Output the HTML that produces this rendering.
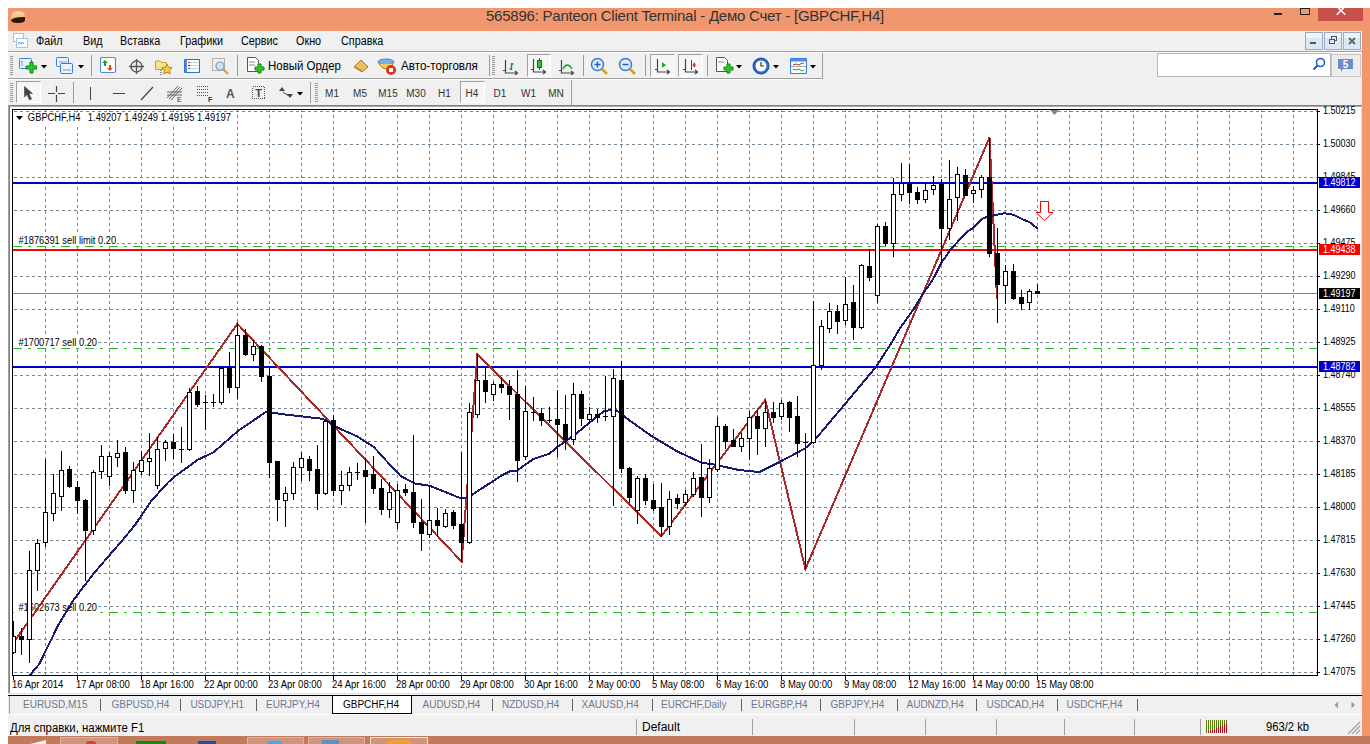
<!DOCTYPE html>
<html><head><meta charset="utf-8"><title>MT4</title><style>
html,body{margin:0;padding:0}
body{width:1370px;height:744px;overflow:hidden;background:#fff;position:relative;font-family:"Liberation Sans",sans-serif;}
.a{position:absolute}
.t{position:absolute;white-space:nowrap;line-height:1}
</style></head><body>

<div class="a" style="left:8px;top:8px;width:1362px;height:728px;background:#f0976f"></div>
<div class="a" style="left:1318px;top:8px;width:45px;height:13px;background:#c7504a"></div>
<svg class="a" style="left:1318px;top:8px" width="45" height="13"><path d="M18.7 -1.8 L27.3 6.8 M27.3 -1.8 L18.7 6.8" stroke="#fff" stroke-width="1.5"/></svg>
<div class="a" style="left:1274px;top:13px;width:8px;height:2px;background:#222"></div>
<div class="a" style="left:1300px;top:8px;width:8px;height:5px;border:1px solid #222;box-sizing:content-box"></div>
<div class="t" style="left:486px;top:8px;font-size:15px;letter-spacing:-0.23px;color:#333">565896: Panteon Client Terminal - Демо Счет - [GBPCHF,H4]</div>
<svg class="a" style="left:10px;top:10px" width="16" height="14"><defs><linearGradient id="gi" x1="0" y1="0" x2="0" y2="1"><stop offset="0" stop-color="#fde0b0"/><stop offset="1" stop-color="#f0a040"/></linearGradient></defs>
<path d="M1 8 Q1 1 8 1 Q15 1 15 7 L15 10 Q15 13 8 13 Q1 13 1 10Z" fill="url(#gi)"/><path d="M1 10 Q3 7 15 7 L15 10 Q15 13 8 13 Q1 13 1 10Z" fill="#2a1506"/></svg>
<div class="a" style="left:8px;top:31px;width:1354px;height:20px;background:#f0f0f0"></div>
<div class="a" style="left:8px;top:51px;width:1354px;height:1px;background:#a0a0a0"></div>
<div class="a" style="left:8px;top:52px;width:1354px;height:1px;background:#fff"></div>
<svg class="a" style="left:13px;top:33px" width="16" height="16"><rect x="0.5" y="0.5" width="10" height="8" fill="#fff" stroke="#4a90e2" stroke-dasharray="1 1"/><rect x="3.5" y="5.5" width="11" height="9" fill="#fff" stroke="#4a90e2" stroke-dasharray="1 1"/><path d="M5 11 l1.5 -2 l1.5 2 l1.5 -2 l1.5 2" stroke="#4a90e2" fill="none"/></svg>
<div class="t" style="left:36px;top:35px;font-size:12px;color:#000;transform:scaleX(0.9);transform-origin:0 0">Файл</div>
<div class="t" style="left:83px;top:35px;font-size:12px;color:#000;transform:scaleX(0.9);transform-origin:0 0">Вид</div>
<div class="t" style="left:120px;top:35px;font-size:12px;color:#000;transform:scaleX(0.9);transform-origin:0 0">Вставка</div>
<div class="t" style="left:180px;top:35px;font-size:12px;color:#000;transform:scaleX(0.9);transform-origin:0 0">Графики</div>
<div class="t" style="left:241px;top:35px;font-size:12px;color:#000;transform:scaleX(0.9);transform-origin:0 0">Сервис</div>
<div class="t" style="left:296px;top:35px;font-size:12px;color:#000;transform:scaleX(0.9);transform-origin:0 0">Окно</div>
<div class="t" style="left:341px;top:35px;font-size:12px;color:#000;transform:scaleX(0.9);transform-origin:0 0">Справка</div>
<div class="a" style="left:1305px;top:32px;width:18px;height:18px;background:linear-gradient(#eef4fb 0,#eef4fb 30%,#d9e7f6 31%,#d9e7f6 100%);border:1px solid #98abc2;box-sizing:border-box"></div>
<div class="a" style="left:1324px;top:32px;width:18px;height:18px;background:linear-gradient(#eef4fb 0,#eef4fb 30%,#d9e7f6 31%,#d9e7f6 100%);border:1px solid #98abc2;box-sizing:border-box"></div>
<div class="a" style="left:1343px;top:32px;width:18px;height:18px;background:linear-gradient(#eef4fb 0,#eef4fb 30%,#d9e7f6 31%,#d9e7f6 100%);border:1px solid #98abc2;box-sizing:border-box"></div>
<div class="a" style="left:1310px;top:42px;width:6px;height:2px;background:#555"></div>
<svg class="a" style="left:1324px;top:32px" width="18" height="18"><rect x="7.5" y="4.5" width="5" height="4" fill="none" stroke="#555"/><rect x="5.5" y="7.5" width="5" height="4" fill="#dce8f5" stroke="#555"/></svg>
<svg class="a" style="left:1343px;top:32px" width="18" height="18"><path d="M6 6 L12 12 M12 6 L6 12" stroke="#666" stroke-width="2"/></svg>
<div class="a" style="left:8px;top:53px;width:1354px;height:52px;background:#f0f0f0"></div>
<div class="a" style="left:8px;top:78px;width:815px;height:1px;background:#a0a0a0"></div>
<div class="a" style="left:822px;top:53px;width:1px;height:26px;background:#a0a0a0"></div>
<div class="a" style="left:8px;top:79px;width:815px;height:1px;background:#fff"></div>
<div class="a" style="left:571px;top:80px;width:1px;height:25px;background:#a0a0a0"></div>
<div class="a" style="left:8px;top:105px;width:1354px;height:1px;background:#808080"></div>
<div class="a" style="left:8px;top:106px;width:1354px;height:1px;background:#a9a9a9"></div>
<div class="a" style="left:10px;top:56px;width:3px;height:1px;background:#9a9a9a"></div><div class="a" style="left:10px;top:58px;width:3px;height:1px;background:#9a9a9a"></div><div class="a" style="left:10px;top:60px;width:3px;height:1px;background:#9a9a9a"></div><div class="a" style="left:10px;top:62px;width:3px;height:1px;background:#9a9a9a"></div><div class="a" style="left:10px;top:64px;width:3px;height:1px;background:#9a9a9a"></div><div class="a" style="left:10px;top:66px;width:3px;height:1px;background:#9a9a9a"></div><div class="a" style="left:10px;top:68px;width:3px;height:1px;background:#9a9a9a"></div><div class="a" style="left:10px;top:70px;width:3px;height:1px;background:#9a9a9a"></div><div class="a" style="left:10px;top:72px;width:3px;height:1px;background:#9a9a9a"></div><div class="a" style="left:10px;top:74px;width:3px;height:1px;background:#9a9a9a"></div>
<div class="a" style="left:10px;top:83px;width:3px;height:1px;background:#9a9a9a"></div><div class="a" style="left:10px;top:85px;width:3px;height:1px;background:#9a9a9a"></div><div class="a" style="left:10px;top:87px;width:3px;height:1px;background:#9a9a9a"></div><div class="a" style="left:10px;top:89px;width:3px;height:1px;background:#9a9a9a"></div><div class="a" style="left:10px;top:91px;width:3px;height:1px;background:#9a9a9a"></div><div class="a" style="left:10px;top:93px;width:3px;height:1px;background:#9a9a9a"></div><div class="a" style="left:10px;top:95px;width:3px;height:1px;background:#9a9a9a"></div><div class="a" style="left:10px;top:97px;width:3px;height:1px;background:#9a9a9a"></div><div class="a" style="left:10px;top:99px;width:3px;height:1px;background:#9a9a9a"></div><div class="a" style="left:10px;top:101px;width:3px;height:1px;background:#9a9a9a"></div>
<div class="a" style="left:492px;top:56px;width:3px;height:1px;background:#9a9a9a"></div><div class="a" style="left:492px;top:58px;width:3px;height:1px;background:#9a9a9a"></div><div class="a" style="left:492px;top:60px;width:3px;height:1px;background:#9a9a9a"></div><div class="a" style="left:492px;top:62px;width:3px;height:1px;background:#9a9a9a"></div><div class="a" style="left:492px;top:64px;width:3px;height:1px;background:#9a9a9a"></div><div class="a" style="left:492px;top:66px;width:3px;height:1px;background:#9a9a9a"></div><div class="a" style="left:492px;top:68px;width:3px;height:1px;background:#9a9a9a"></div><div class="a" style="left:492px;top:70px;width:3px;height:1px;background:#9a9a9a"></div><div class="a" style="left:492px;top:72px;width:3px;height:1px;background:#9a9a9a"></div><div class="a" style="left:492px;top:74px;width:3px;height:1px;background:#9a9a9a"></div>
<div class="a" style="left:315px;top:83px;width:3px;height:1px;background:#9a9a9a"></div><div class="a" style="left:315px;top:85px;width:3px;height:1px;background:#9a9a9a"></div><div class="a" style="left:315px;top:87px;width:3px;height:1px;background:#9a9a9a"></div><div class="a" style="left:315px;top:89px;width:3px;height:1px;background:#9a9a9a"></div><div class="a" style="left:315px;top:91px;width:3px;height:1px;background:#9a9a9a"></div><div class="a" style="left:315px;top:93px;width:3px;height:1px;background:#9a9a9a"></div><div class="a" style="left:315px;top:95px;width:3px;height:1px;background:#9a9a9a"></div><div class="a" style="left:315px;top:97px;width:3px;height:1px;background:#9a9a9a"></div><div class="a" style="left:315px;top:99px;width:3px;height:1px;background:#9a9a9a"></div><div class="a" style="left:315px;top:101px;width:3px;height:1px;background:#9a9a9a"></div>
<div class="a" style="left:91px;top:55px;width:1px;height:21px;background:#9a9a9a"></div>
<div class="a" style="left:237px;top:55px;width:1px;height:21px;background:#9a9a9a"></div>
<div class="a" style="left:489px;top:55px;width:1px;height:21px;background:#9a9a9a"></div>
<div class="a" style="left:583px;top:55px;width:1px;height:21px;background:#9a9a9a"></div>
<div class="a" style="left:645px;top:55px;width:1px;height:21px;background:#9a9a9a"></div>
<div class="a" style="left:707px;top:55px;width:1px;height:21px;background:#9a9a9a"></div>
<div class="a" style="left:73px;top:82px;width:1px;height:21px;background:#9a9a9a"></div>
<div class="a" style="left:310px;top:82px;width:1px;height:21px;background:#9a9a9a"></div>
<div class="a" style="left:16px;top:81px;width:25px;height:22px;background:#f6f6f6;border-left:1px solid #a0a0a0;border-top:1px solid #a0a0a0;border-right:1px solid #fff;border-bottom:1px solid #fff;box-sizing:border-box"></div>
<div class="a" style="left:527px;top:54px;width:24px;height:23px;background:#f6f6f6;border-left:1px solid #a0a0a0;border-top:1px solid #a0a0a0;border-right:1px solid #fff;border-bottom:1px solid #fff;box-sizing:border-box"></div>
<div class="a" style="left:650px;top:54px;width:25px;height:23px;background:#f6f6f6;border-left:1px solid #a0a0a0;border-top:1px solid #a0a0a0;border-right:1px solid #fff;border-bottom:1px solid #fff;box-sizing:border-box"></div>
<div class="a" style="left:678px;top:54px;width:25px;height:23px;background:#f6f6f6;border-left:1px solid #a0a0a0;border-top:1px solid #a0a0a0;border-right:1px solid #fff;border-bottom:1px solid #fff;box-sizing:border-box"></div>
<div class="a" style="left:460px;top:81px;width:25px;height:22px;background:#f6f6f6;border-left:1px solid #a0a0a0;border-top:1px solid #a0a0a0;border-right:1px solid #fff;border-bottom:1px solid #fff;box-sizing:border-box"></div>
<svg class="a" style="left:19px;top:57px" width="18" height="17"><rect x="0.5" y="1.5" width="12" height="10" rx="1" fill="#eaf2fb" stroke="#3b7dd8"/><path d="M3 4 v5 M2 5 l1 -1 l1 1" stroke="#7a9cc0" fill="none"/><path d="M9 5 h4 v-4 h3 v4 h4 v3 h-4 v4 h-3 v-4 h-4z" transform="translate(-2,4)" fill="#2ec82e" stroke="#0a8a0a"/></svg>
<svg class="a" style="left:41px;top:65px" width="7" height="4"><path d="M0 0 L6 0 L3 3.5Z" fill="#000"/></svg>
<svg class="a" style="left:56px;top:57px" width="18" height="18"><rect x="0.5" y="0.5" width="12" height="9" rx="1" fill="#eaf2fb" stroke="#3b7dd8"/><rect x="4.5" y="6.5" width="12" height="10" rx="1" fill="#eaf2fb" stroke="#3b7dd8"/><path d="M3 5 h8 M7 13 h8" stroke="#7a9cc0"/></svg>
<svg class="a" style="left:78px;top:65px" width="7" height="4"><path d="M0 0 L6 0 L3 3.5Z" fill="#000"/></svg>
<svg class="a" style="left:100px;top:57px" width="17" height="18"><rect x="0.5" y="0.5" width="15" height="15" rx="1.5" fill="#fff" stroke="#4a8ee0" stroke-width="1.2"/><path d="M5 3 l3 3 h-2 v3 h-2 v-3 h-2z" fill="#22a022"/><path d="M10 14 l3 -3 h-2 v-3 h-2 v3 h-2z" fill="#e05020"/></svg>
<svg class="a" style="left:128px;top:58px" width="17" height="17"><circle cx="8.5" cy="8.5" r="5.5" fill="none" stroke="#555" stroke-width="1.3"/><path d="M8.5 1 v15 M1 8.5 h15" stroke="#555" stroke-width="1.3"/></svg>
<svg class="a" style="left:155px;top:58px" width="18" height="17"><path d="M0.5 3 h5 l1 1.5 h5 v7 h-11z" fill="#f7e38a" stroke="#c9a437"/><path d="M12 6 l1.6 3.3 3.6 .5 -2.6 2.5 .6 3.6 -3.2 -1.7 -3.2 1.7 .6 -3.6 -2.6 -2.5 3.6 -.5z" fill="#f5d040" stroke="#b8860b"/><path d="M6 12 v5" stroke="#333" stroke-dasharray="1 1"/></svg>
<svg class="a" style="left:184px;top:59px" width="16" height="14"><rect x="0.5" y="0.5" width="15" height="13" rx="1" fill="#fff" stroke="#2f6fc8" stroke-width="1.2"/><rect x="1" y="1" width="2" height="12" fill="#4a90e2"/><path d="M5 3.5 h9 M5 6.5 h9 M5 9.5 h9" stroke="#9cc" stroke-width="0.8"/><circle cx="5" cy="3.5" r=".8" fill="#d00"/><circle cx="5" cy="6.5" r=".8" fill="#000"/><circle cx="5" cy="9.5" r=".8" fill="#d00"/></svg>
<svg class="a" style="left:212px;top:58px" width="18" height="18"><rect x="0.5" y="0.5" width="12" height="12" fill="#f3efe4" stroke="#b8b0a0"/><circle cx="8" cy="8" r="4" fill="#cfe2f3" stroke="#6a9fd8" stroke-width="1.2"/><path d="M11 11 l5 5" stroke="#d4a020" stroke-width="2"/></svg>
<svg class="a" style="left:247px;top:57px" width="18" height="19"><path d="M0.5 0.5 h8 l3 3 v11 h-11z" fill="#fff" stroke="#555"/><path d="M2 5 h6 M2 8 h6" stroke="#888"/><path d="M8 10 h3 v-3 h3 v3 h3 v3 h-3 v3 h-3 v-3 h-3z" fill="#2ec82e" stroke="#0a8a0a"/></svg>
<div class="t" style="left:268px;top:60px;font-size:12px;color:#000;transform:scaleX(0.954);transform-origin:0 0">Новый Ордер</div>
<svg class="a" style="left:352px;top:58px" width="18" height="16"><path d="M2 9 L9 2 L16 9 L10 14Z" fill="#e8c060" stroke="#a07820"/><path d="M2 9 L10 14 L10 12 L3 8z" fill="#c09040"/></svg>
<svg class="a" style="left:377px;top:56px" width="20" height="20"><ellipse cx="9" cy="6" rx="8" ry="3" fill="#7ab0e0" stroke="#4a80c0"/><path d="M2 8 q7 10 14 0" fill="#f5d050" stroke="#b08020"/><circle cx="14" cy="14" r="5" fill="#e03020"/><rect x="12" y="12" width="4" height="4" fill="#fff"/></svg>
<div class="t" style="left:401px;top:60px;font-size:12px;color:#000;transform:scaleX(0.97);transform-origin:0 0">Авто-торговля</div>
<svg class="a" style="left:502px;top:58px" width="17" height="17"><path d="M3.5 2 v13 h12 M1 12.5 h3 M13 13 l2.5 2 l-2.5 2" stroke="#444" fill="none" stroke-width="1.2"/><path d="M9.5 5 v7 M7.5 11 h2 M9.5 6 h2" stroke="#1a9a1a" stroke-width="1.4"/></svg>
<svg class="a" style="left:530px;top:57px" width="17" height="18"><path d="M3.5 2 v13 h12 M1 12.5 h3 M13 13 l2.5 2 l-2.5 2" stroke="#444" fill="none" stroke-width="1.2"/><rect x="7.5" y="3.5" width="4" height="7" fill="#2ec82e" stroke="#0a7a0a"/><path d="M9.5 1 v3 M9.5 10 v3" stroke="#0a7a0a"/></svg>
<svg class="a" style="left:558px;top:58px" width="17" height="17"><path d="M3.5 2 v13 h12 M1 12.5 h3 M13 13 l2.5 2 l-2.5 2" stroke="#444" fill="none" stroke-width="1.2"/><path d="M5 11 q4 -8 9 0" stroke="#1a9a1a" fill="none" stroke-width="1.3"/></svg>
<svg class="a" style="left:590px;top:57px" width="19" height="19"><circle cx="7.5" cy="7.5" r="6" fill="#dcecfb" stroke="#3a7ad0" stroke-width="1.5"/><path d="M4.5 7.5 h6 M7.5 4.5 v6" stroke="#2060c0" stroke-width="1.5"/><path d="M12 12 l5 5" stroke="#d4a020" stroke-width="2.5"/></svg>
<svg class="a" style="left:618px;top:57px" width="19" height="19"><circle cx="7.5" cy="7.5" r="6" fill="#dcecfb" stroke="#3a7ad0" stroke-width="1.5"/><path d="M4.5 7.5 h6" stroke="#2060c0" stroke-width="1.5"/><path d="M12 12 l5 5" stroke="#d4a020" stroke-width="2.5"/></svg>
<svg class="a" style="left:654px;top:57px" width="18" height="18"><path d="M3.5 2 v13 h12 M1 12.5 h3 M13 13 l2.5 2 l-2.5 2" stroke="#444" fill="none" stroke-width="1.2"/><path d="M8 5 l4 3 l-4 3z" fill="#1ab01a"/></svg>
<svg class="a" style="left:682px;top:57px" width="18" height="18"><path d="M3.5 2 v13 h12 M1 12.5 h3 M13 13 l2.5 2 l-2.5 2" stroke="#444" fill="none" stroke-width="1.2"/><path d="M9.5 3 v10" stroke="#444"/><path d="M14 8 h-3 M11 8 l2 -2 M11 8 l2 2" stroke="#e02020" stroke-width="1.2"/></svg>
<svg class="a" style="left:716px;top:57px" width="18" height="19"><path d="M0.5 0.5 h8 l3 3 v11 h-11z" fill="#fff" stroke="#555"/><path d="M2 5 h6" stroke="#888"/><path d="M8 10 h3 v-3 h3 v3 h3 v3 h-3 v3 h-3 v-3 h-3z" fill="#2ec82e" stroke="#0a8a0a"/></svg>
<svg class="a" style="left:736px;top:65px" width="7" height="4"><path d="M0 0 L6 0 L3 3.5Z" fill="#000"/></svg>
<svg class="a" style="left:752px;top:57px" width="18" height="18"><circle cx="9" cy="9" r="8" fill="#2a6ad0" stroke="#1a4a9a"/><circle cx="9" cy="9" r="5.5" fill="#fff"/><path d="M9 5 v4 h3" stroke="#333" stroke-width="1.2" fill="none"/></svg>
<svg class="a" style="left:773px;top:65px" width="7" height="4"><path d="M0 0 L6 0 L3 3.5Z" fill="#000"/></svg>
<svg class="a" style="left:790px;top:58px" width="17" height="16"><rect x="0.5" y="0.5" width="16" height="15" rx="1" fill="#fff" stroke="#3b7dd8" stroke-width="1.2"/><rect x="1" y="1" width="15" height="2.5" fill="#4a90e2"/><path d="M1 8.5 h15" stroke="#9ab"/><path d="M3 7 l3 -1 l3 1 l3 -2 l2 1" stroke="#c03020" fill="none"/><path d="M3 11 l3 1 l3 -1 l3 2 l2 -1" stroke="#20a020" fill="none"/></svg>
<svg class="a" style="left:810px;top:65px" width="7" height="4"><path d="M0 0 L6 0 L3 3.5Z" fill="#000"/></svg>
<div class="a" style="left:1157px;top:53px;width:174px;height:24px;background:#fff;border:1px solid #b8b8b8;box-sizing:border-box"></div>
<svg class="a" style="left:1312px;top:57px" width="14" height="14"><circle cx="8.5" cy="5.5" r="4" fill="none" stroke="#2a5ec0" stroke-width="1.6"/><path d="M5.5 8.5 L1.5 12.5" stroke="#2a5ec0" stroke-width="2.2"/></svg>
<div class="a" style="left:1331px;top:54px;width:30px;height:23px;background:#ececec;border:1px solid #c8c8c8;box-sizing:border-box"></div>
<svg class="a" style="left:1337px;top:58px" width="18" height="16"><path d="M1 1 h15 v10 h-10 l-2 3 v-3 h-3z" fill="#6b8cc4"/><text x="8.5" y="10" font-size="10" font-family="Liberation Sans" font-weight="bold" fill="#fff" text-anchor="middle">5</text></svg>
<svg class="a" style="left:24px;top:86px" width="9" height="15"><path d="M0.5 0.5 L0.5 11 L3 8.5 L5.5 14 L7.5 13 L5 7.5 L8.5 7.5Z" fill="#444" stroke="#444" stroke-width="0.6"/></svg>
<svg class="a" style="left:48px;top:86px" width="17" height="16"><path d="M8.5 0 v6 M8.5 9 v7 M0 7.5 h7 M10 7.5 h7" stroke="#444" stroke-width="1.2"/></svg>
<div class="a" style="left:90px;top:87px;width:1px;height:13px;background:#444"></div>
<div class="a" style="left:113px;top:93px;width:12px;height:1px;background:#444"></div>
<svg class="a" style="left:140px;top:86px" width="14" height="15"><path d="M1 14 L13 1" stroke="#444" stroke-width="1.2"/></svg>
<svg class="a" style="left:166px;top:84px" width="18" height="18"><path d="M1 14 L12 2 M3 15 L14 3 M5 16 L16 4 M1 8 h15 M1 11 h15" stroke="#555" stroke-width="0.9"/><text x="11" y="18" font-size="7" font-family="Liberation Sans" fill="#333">E</text></svg>
<svg class="a" style="left:196px;top:84px" width="18" height="18"><path d="M1 2.5 h12 M1 5.5 h12 M1 8.5 h12 M1 11.5 h12" stroke="#555" stroke-dasharray="1 1"/><text x="12" y="18" font-size="7" font-family="Liberation Sans" fill="#333" font-weight="bold">F</text></svg>
<div class="t" style="left:226px;top:88px;font-size:12px;font-weight:bold;color:#555">A</div>
<svg class="a" style="left:251px;top:85px" width="16" height="16"><rect x="1.5" y="1.5" width="12" height="12" fill="none" stroke="#555" stroke-dasharray="1 1" shape-rendering="crispEdges"/><text x="7.5" y="12" font-size="11" font-family="Liberation Sans" font-weight="bold" fill="#444" text-anchor="middle">T</text></svg>
<svg class="a" style="left:279px;top:86px" width="14" height="14"><path d="M3 1 l3 4 h-6z M11 12 l3 -4 h-6z" fill="#444"/><path d="M4 6 l6 4" stroke="#444"/></svg>
<svg class="a" style="left:297px;top:92px" width="7" height="4"><path d="M0 0 L6 0 L3 3.5Z" fill="#000"/></svg>
<div class="t" style="left:312px;width:40px;text-align:center;top:89px;font-size:10px;color:#333">M1</div>
<div class="t" style="left:340px;width:40px;text-align:center;top:89px;font-size:10px;color:#333">M5</div>
<div class="t" style="left:368px;width:40px;text-align:center;top:89px;font-size:10px;color:#333">M15</div>
<div class="t" style="left:396px;width:40px;text-align:center;top:89px;font-size:10px;color:#333">M30</div>
<div class="t" style="left:424.5px;width:40px;text-align:center;top:89px;font-size:10px;color:#333">H1</div>
<div class="t" style="left:452px;width:40px;text-align:center;top:89px;font-size:10px;color:#333">H4</div>
<div class="t" style="left:480px;width:40px;text-align:center;top:89px;font-size:10px;color:#333">D1</div>
<div class="t" style="left:508.5px;width:40px;text-align:center;top:89px;font-size:10px;color:#333">W1</div>
<div class="t" style="left:536px;width:40px;text-align:center;top:89px;font-size:10px;color:#333">MN</div>
<div class="a" style="left:8px;top:107px;width:1354px;height:587px;background:#fff"></div>
<div class="a" style="left:8px;top:105px;width:2px;height:589px;background:#a0a0a0"></div>
<div class="a" style="left:9px;top:106px;width:1px;height:587px;background:#808080"></div>
<div class="a" style="left:1361px;top:106px;width:1px;height:588px;background:#e3e3e3"></div>
<div class="a" style="left:8px;top:693px;width:1354px;height:1px;background:#e3e3e3"></div>
<svg class="a" style="left:0px;top:0px" width="1370" height="744" shape-rendering="crispEdges"><defs><clipPath id="pc"><rect x="13" y="110" width="1304" height="565"/></clipPath></defs><path d="M13 111.5 H1317 M13 144.5 H1317 M13 177.5 H1317 M13 210.5 H1317 M13 243.5 H1317 M13 276.5 H1317 M13 309.5 H1317 M13 342.5 H1317 M13 375.5 H1317 M13 408.5 H1317 M13 441.5 H1317 M13 474.5 H1317 M13 507.5 H1317 M13 540.5 H1317 M13 573.5 H1317 M13 606.5 H1317 M13 639.5 H1317 M13 672.5 H1317 " stroke="#778899" stroke-width="1" stroke-dasharray="3 3" stroke-dashoffset="-1"/><path d="M45.5 110 V675 M77.5 110 V675 M109.5 110 V675 M141.5 110 V675 M173.5 110 V675 M205.5 110 V675 M237.5 110 V675 M269.5 110 V675 M301.5 110 V675 M333.5 110 V675 M365.5 110 V675 M397.5 110 V675 M429.5 110 V675 M461.5 110 V675 M493.5 110 V675 M525.5 110 V675 M557.5 110 V675 M589.5 110 V675 M621.5 110 V675 M653.5 110 V675 M685.5 110 V675 M717.5 110 V675 M749.5 110 V675 M781.5 110 V675 M813.5 110 V675 M845.5 110 V675 M877.5 110 V675 M909.5 110 V675 M941.5 110 V675 M973.5 110 V675 M1005.5 110 V675 M1037.5 110 V675 M1069.5 110 V675 M1101.5 110 V675 M1133.5 110 V675 M1165.5 110 V675 M1197.5 110 V675 M1229.5 110 V675 M1261.5 110 V675 M1293.5 110 V675 " stroke="#778899" stroke-width="1" stroke-dasharray="3 3" stroke-dashoffset="-5"/><g clip-path="url(#pc)"><path d="M13 246.5 H1317 M13 348.5 H1317 M13 612.5 H1317" stroke="#2eb82e" stroke-width="1" stroke-dasharray="9 6 3 6"/><rect x="13" y="249" width="1304" height="2" fill="#ff0000"/><rect x="13" y="182" width="1304" height="2" fill="#0000cd"/><rect x="13" y="366" width="1304" height="2" fill="#0000cd"/><path d="M13 293.5 H1317" stroke="#778899" stroke-width="1"/></g></svg>
<div class="t" style="left:14px;top:234px;padding:1px 1px 0 5px;background:#fff;font-size:10.5px;color:#000;transform:scaleX(0.885);transform-origin:0 0">#1876391 sell limit 0.20</div>
<div class="t" style="left:14px;top:336px;padding:1px 1px 0 5px;background:#fff;font-size:10.5px;color:#000;transform:scaleX(0.885);transform-origin:0 0">#1700717 sell 0.20</div>
<div class="t" style="left:14px;top:601px;padding:1px 1px 0 5px;background:#fff;font-size:10.5px;color:#000;transform:scaleX(0.885);transform-origin:0 0">#1602673 sell 0.20</div>
<svg class="a" style="left:0px;top:0px" width="1370" height="744"><defs><clipPath id="pc2"><rect x="13" y="110" width="1304" height="565"/></clipPath></defs><g clip-path="url(#pc2)"><polyline points="13.0,643.5 237.4,323.8 461.6,561.6 477.4,354.4 661.3,536.1 765.3,399.9 805.4,569.0 989.5,137.5 997.0,299.0" fill="none" stroke="#a52a2a" stroke-width="2" shape-rendering="crispEdges"/><polyline points="20.0,690.0 30.2,674.7 39.3,664.0 58.4,624.7 74.5,598.5 94.7,572.3 120.9,542.0 134.9,525.2 150.7,501.6 168.1,482.4 175.1,476.3 190.8,464.9 197.8,459.7 213.5,452.4 238.5,430.5 266.5,411.6 281.0,414.0 323.2,418.9 337.7,427.8 357.1,436.3 374.0,447.2 383.7,458.0 400.7,476.2 415.2,483.5 430.0,485.9 460.0,498.0 464.8,498.0 471.3,495.4 483.4,487.4 500.9,475.9 510.3,471.2 517.0,470.6 533.2,459.1 549.3,453.8 557.4,447.0 566.8,440.3 576.2,433.6 591.0,421.5 604.4,410.8 615.9,409.8 629.0,420.0 651.6,436.1 677.4,451.5 701.5,462.7 715.0,464.7 737.8,469.8 759.3,472.1 782.2,460.6 805.0,448.5 815.5,439.1 845.2,403.8 865.4,379.5 876.1,366.7 890.9,343.8 900.3,327.7 913.8,308.9 923.2,293.4 932.6,280.0 941.5,262.6 950.9,249.1 967.0,231.7 973.8,227.6 981.8,218.9 987.2,216.9 999.3,214.2 1004.4,213.3 1013.4,214.7 1020.5,218.3 1029.6,222.3 1037.6,228.4" fill="none" stroke="#191970" stroke-width="2" stroke-linejoin="round" shape-rendering="crispEdges"/></g><path d="M1040.5 201.5 h8 v11 h4.5 l-8.5 8 l-8.5 -8 h4.5z" fill="#fff" stroke="#ff0000" stroke-width="1"/></svg>
<svg class="a" style="left:0px;top:0px" width="1370" height="744" shape-rendering="crispEdges"><defs><clipPath id="pc3"><rect x="13" y="110" width="1304" height="565"/></clipPath></defs><g clip-path="url(#pc3)"><path d="M13.5 621 V654 M21.5 628 V655 M29.5 551 V663 M37.5 539 V591 M45.5 459 V547 M53.5 474 V521 M61.5 451 V511 M69.5 466 V488 M77.5 481 V514 M85.5 499 V581 M93.5 470 V535 M101.5 445 V479 M109.5 452 V486 M117.5 440 V467 M125.5 447 V494 M133.5 462 V503 M141.5 451 V475 M149.5 433 V476 M157.5 437 V489 M165.5 440 V461 M173.5 434 V459 M181.5 427 V463 M189.5 388 V451 M197.5 386 V407 M205.5 395 V430 M213.5 394 V407 M221.5 366 V405 M229.5 352 V393 M237.5 323 V399 M245.5 329 V356 M253.5 341 V361 M261.5 345 V382 M269.5 368 V478 M277.5 461 V521 M285.5 487 V527 M293.5 462 V500 M301.5 452 V481 M309.5 456 V481 M317.5 445 V510 M325.5 419 V495 M333.5 415 V496 M341.5 471 V505 M349.5 467 V491 M357.5 463 V480 M365.5 458 V523 M373.5 456 V494 M381.5 479 V515 M389.5 482 V518 M397.5 484 V529 M405.5 484 V496 M413.5 435 V528 M421.5 499 V551 M429.5 485 V538 M437.5 508 V537 M445.5 509 V528 M453.5 510 V529 M461.5 452 V562 M469.5 403 V544 M477.5 354 V418 M485.5 366 V403 M493.5 382 V401 M501.5 377 V393 M509.5 380 V420 M517.5 370 V482 M525.5 386 V460 M533.5 397 V421 M541.5 408 V426 M549.5 407 V423 M557.5 390 V457 M565.5 395 V450 M573.5 383 V445 M581.5 391 V426 M589.5 407 V424 M597.5 409 V423 M605.5 376 V421 M613.5 369 V506 M621.5 361 V473 M629.5 467 V503 M637.5 476 V524 M645.5 474 V505 M653.5 484 V511 M661.5 483 V537 M669.5 491 V535 M677.5 494 V509 M685.5 490 V506 M693.5 472 V497 M701.5 444 V517 M709.5 459 V503 M717.5 417 V472 M725.5 424 V449 M733.5 429 V447 M741.5 433 V452 M749.5 411 V460 M757.5 410 V455 M765.5 400 V447 M773.5 402 V423 M781.5 400 V420 M789.5 401 V432 M797.5 396 V457 M805.5 433 V569 M813.5 301 V444 M821.5 320 V370 M829.5 303 V333 M837.5 305 V334 M845.5 277 V325 M853.5 285 V340 M861.5 264 V329 M869.5 249 V281 M877.5 224 V303 M885.5 222 V246 M893.5 178 V257 M901.5 163 V201 M909.5 164 V204 M917.5 187 V204 M925.5 183 V203 M933.5 176 V195 M941.5 179 V261 M949.5 160 V240 M957.5 167 V221 M965.5 169 V196 M973.5 186 V203 M981.5 175 V198 M989.5 138 V257 M997.5 228 V323 M1005.5 265 V304 M1013.5 264 V300 M1021.5 290 V310 M1029.5 289 V310 M1037.5 284 V294 " stroke="#000" stroke-width="1"/><rect x="11" y="636" width="5" height="17" fill="#000"/><rect x="12" y="637" width="3" height="15" fill="#fff"/><rect x="19" y="636" width="5" height="4" fill="#000"/><rect x="27" y="570" width="5" height="70" fill="#000"/><rect x="28" y="571" width="3" height="68" fill="#fff"/><rect x="35" y="543" width="5" height="28" fill="#000"/><rect x="36" y="544" width="3" height="26" fill="#fff"/><rect x="43" y="512" width="5" height="31" fill="#000"/><rect x="44" y="513" width="3" height="29" fill="#fff"/><rect x="51" y="493" width="5" height="21" fill="#000"/><rect x="52" y="494" width="3" height="19" fill="#fff"/><rect x="59" y="470" width="5" height="27" fill="#000"/><rect x="60" y="471" width="3" height="25" fill="#fff"/><rect x="67" y="469" width="5" height="18" fill="#000"/><rect x="75" y="487" width="5" height="14" fill="#000"/><rect x="83" y="500" width="5" height="31" fill="#000"/><rect x="91" y="472" width="5" height="59" fill="#000"/><rect x="92" y="473" width="3" height="57" fill="#fff"/><rect x="99" y="456" width="5" height="16" fill="#000"/><rect x="100" y="457" width="3" height="14" fill="#fff"/><rect x="107" y="456" width="5" height="21" fill="#000"/><rect x="108" y="457" width="3" height="19" fill="#fff"/><rect x="115" y="453" width="5" height="5" fill="#000"/><rect x="116" y="454" width="3" height="3" fill="#fff"/><rect x="123" y="452" width="5" height="39" fill="#000"/><rect x="131" y="470" width="5" height="21" fill="#000"/><rect x="132" y="471" width="3" height="19" fill="#fff"/><rect x="139" y="460" width="5" height="12" fill="#000"/><rect x="140" y="461" width="3" height="10" fill="#fff"/><rect x="147" y="458" width="5" height="4" fill="#000"/><rect x="148" y="459" width="3" height="2" fill="#fff"/><rect x="155" y="449" width="5" height="37" fill="#000"/><rect x="156" y="450" width="3" height="35" fill="#fff"/><rect x="163" y="442" width="5" height="7" fill="#000"/><rect x="164" y="443" width="3" height="5" fill="#fff"/><rect x="171" y="442" width="5" height="7" fill="#000"/><rect x="187" y="392" width="5" height="58" fill="#000"/><rect x="188" y="393" width="3" height="56" fill="#fff"/><rect x="195" y="391" width="5" height="14" fill="#000"/><rect x="219" y="368" width="5" height="35" fill="#000"/><rect x="220" y="369" width="3" height="33" fill="#fff"/><rect x="227" y="367" width="5" height="21" fill="#000"/><rect x="235" y="335" width="5" height="53" fill="#000"/><rect x="236" y="336" width="3" height="51" fill="#fff"/><rect x="243" y="335" width="5" height="20" fill="#000"/><rect x="251" y="346" width="5" height="9" fill="#000"/><rect x="252" y="347" width="3" height="7" fill="#fff"/><rect x="259" y="346" width="5" height="31" fill="#000"/><rect x="267" y="376" width="5" height="87" fill="#000"/><rect x="275" y="461" width="5" height="39" fill="#000"/><rect x="283" y="493" width="5" height="8" fill="#000"/><rect x="284" y="494" width="3" height="6" fill="#fff"/><rect x="291" y="467" width="5" height="27" fill="#000"/><rect x="292" y="468" width="3" height="25" fill="#fff"/><rect x="299" y="458" width="5" height="10" fill="#000"/><rect x="300" y="459" width="3" height="8" fill="#fff"/><rect x="307" y="459" width="5" height="12" fill="#000"/><rect x="315" y="469" width="5" height="25" fill="#000"/><rect x="323" y="421" width="5" height="73" fill="#000"/><rect x="324" y="422" width="3" height="71" fill="#fff"/><rect x="331" y="420" width="5" height="71" fill="#000"/><rect x="339" y="485" width="5" height="6" fill="#000"/><rect x="340" y="486" width="3" height="4" fill="#fff"/><rect x="347" y="472" width="5" height="14" fill="#000"/><rect x="348" y="473" width="3" height="12" fill="#fff"/><rect x="363" y="470" width="5" height="7" fill="#000"/><rect x="371" y="474" width="5" height="15" fill="#000"/><rect x="379" y="488" width="5" height="22" fill="#000"/><rect x="387" y="492" width="5" height="18" fill="#000"/><rect x="388" y="493" width="3" height="16" fill="#fff"/><rect x="395" y="490" width="5" height="33" fill="#000"/><rect x="396" y="491" width="3" height="31" fill="#fff"/><rect x="403" y="489" width="5" height="4" fill="#000"/><rect x="411" y="492" width="5" height="31" fill="#000"/><rect x="419" y="522" width="5" height="12" fill="#000"/><rect x="427" y="520" width="5" height="15" fill="#000"/><rect x="428" y="521" width="3" height="13" fill="#fff"/><rect x="435" y="520" width="5" height="6" fill="#000"/><rect x="443" y="513" width="5" height="14" fill="#000"/><rect x="444" y="514" width="3" height="12" fill="#fff"/><rect x="451" y="512" width="5" height="14" fill="#000"/><rect x="459" y="524" width="5" height="19" fill="#000"/><rect x="467" y="412" width="5" height="131" fill="#000"/><rect x="468" y="413" width="3" height="129" fill="#fff"/><rect x="475" y="380" width="5" height="35" fill="#000"/><rect x="476" y="381" width="3" height="33" fill="#fff"/><rect x="483" y="380" width="5" height="12" fill="#000"/><rect x="491" y="384" width="5" height="11" fill="#000"/><rect x="492" y="385" width="3" height="9" fill="#fff"/><rect x="499" y="384" width="5" height="4" fill="#000"/><rect x="507" y="386" width="5" height="9" fill="#000"/><rect x="515" y="394" width="5" height="67" fill="#000"/><rect x="523" y="411" width="5" height="46" fill="#000"/><rect x="524" y="412" width="3" height="44" fill="#fff"/><rect x="539" y="413" width="5" height="8" fill="#000"/><rect x="555" y="419" width="5" height="6" fill="#000"/><rect x="563" y="424" width="5" height="16" fill="#000"/><rect x="571" y="394" width="5" height="46" fill="#000"/><rect x="572" y="395" width="3" height="44" fill="#fff"/><rect x="579" y="394" width="5" height="25" fill="#000"/><rect x="587" y="414" width="5" height="6" fill="#000"/><rect x="588" y="415" width="3" height="4" fill="#fff"/><rect x="595" y="414" width="5" height="4" fill="#000"/><rect x="611" y="378" width="5" height="39" fill="#000"/><rect x="612" y="379" width="3" height="37" fill="#fff"/><rect x="619" y="380" width="5" height="89" fill="#000"/><rect x="627" y="468" width="5" height="30" fill="#000"/><rect x="635" y="478" width="5" height="33" fill="#000"/><rect x="636" y="479" width="3" height="31" fill="#fff"/><rect x="643" y="478" width="5" height="23" fill="#000"/><rect x="651" y="500" width="5" height="9" fill="#000"/><rect x="659" y="507" width="5" height="20" fill="#000"/><rect x="667" y="499" width="5" height="28" fill="#000"/><rect x="668" y="500" width="3" height="26" fill="#fff"/><rect x="675" y="498" width="5" height="6" fill="#000"/><rect x="683" y="494" width="5" height="9" fill="#000"/><rect x="684" y="495" width="3" height="7" fill="#fff"/><rect x="691" y="478" width="5" height="17" fill="#000"/><rect x="692" y="479" width="3" height="15" fill="#fff"/><rect x="699" y="477" width="5" height="21" fill="#000"/><rect x="707" y="468" width="5" height="30" fill="#000"/><rect x="708" y="469" width="3" height="28" fill="#fff"/><rect x="715" y="426" width="5" height="44" fill="#000"/><rect x="716" y="427" width="3" height="42" fill="#fff"/><rect x="723" y="426" width="5" height="16" fill="#000"/><rect x="731" y="440" width="5" height="7" fill="#000"/><rect x="739" y="438" width="5" height="9" fill="#000"/><rect x="740" y="439" width="3" height="7" fill="#fff"/><rect x="747" y="417" width="5" height="22" fill="#000"/><rect x="748" y="418" width="3" height="20" fill="#fff"/><rect x="755" y="416" width="5" height="13" fill="#000"/><rect x="763" y="412" width="5" height="17" fill="#000"/><rect x="764" y="413" width="3" height="15" fill="#fff"/><rect x="771" y="412" width="5" height="6" fill="#000"/><rect x="779" y="403" width="5" height="14" fill="#000"/><rect x="780" y="404" width="3" height="12" fill="#fff"/><rect x="787" y="402" width="5" height="16" fill="#000"/><rect x="795" y="416" width="5" height="28" fill="#000"/><rect x="811" y="365" width="5" height="78" fill="#000"/><rect x="812" y="366" width="3" height="76" fill="#fff"/><rect x="819" y="326" width="5" height="40" fill="#000"/><rect x="820" y="327" width="3" height="38" fill="#fff"/><rect x="827" y="311" width="5" height="18" fill="#000"/><rect x="828" y="312" width="3" height="16" fill="#fff"/><rect x="835" y="311" width="5" height="11" fill="#000"/><rect x="843" y="304" width="5" height="17" fill="#000"/><rect x="844" y="305" width="3" height="15" fill="#fff"/><rect x="851" y="302" width="5" height="26" fill="#000"/><rect x="859" y="265" width="5" height="63" fill="#000"/><rect x="860" y="266" width="3" height="61" fill="#fff"/><rect x="867" y="266" width="5" height="12" fill="#000"/><rect x="875" y="226" width="5" height="70" fill="#000"/><rect x="876" y="227" width="3" height="68" fill="#fff"/><rect x="883" y="226" width="5" height="18" fill="#000"/><rect x="891" y="194" width="5" height="50" fill="#000"/><rect x="892" y="195" width="3" height="48" fill="#fff"/><rect x="899" y="183" width="5" height="12" fill="#000"/><rect x="900" y="184" width="3" height="10" fill="#fff"/><rect x="907" y="183" width="5" height="10" fill="#000"/><rect x="915" y="192" width="5" height="8" fill="#000"/><rect x="923" y="190" width="5" height="10" fill="#000"/><rect x="924" y="191" width="3" height="8" fill="#fff"/><rect x="931" y="185" width="5" height="5" fill="#000"/><rect x="932" y="186" width="3" height="3" fill="#fff"/><rect x="939" y="184" width="5" height="45" fill="#000"/><rect x="947" y="199" width="5" height="30" fill="#000"/><rect x="948" y="200" width="3" height="28" fill="#fff"/><rect x="955" y="174" width="5" height="24" fill="#000"/><rect x="956" y="175" width="3" height="22" fill="#fff"/><rect x="963" y="175" width="5" height="21" fill="#000"/><rect x="971" y="190" width="5" height="4" fill="#000"/><rect x="972" y="191" width="3" height="2" fill="#fff"/><rect x="979" y="177" width="5" height="13" fill="#000"/><rect x="980" y="178" width="3" height="11" fill="#fff"/><rect x="987" y="177" width="5" height="77" fill="#000"/><rect x="995" y="253" width="5" height="32" fill="#000"/><rect x="1003" y="271" width="5" height="15" fill="#000"/><rect x="1004" y="272" width="3" height="13" fill="#fff"/><rect x="1011" y="271" width="5" height="28" fill="#000"/><rect x="1019" y="297" width="5" height="7" fill="#000"/><rect x="1027" y="291" width="5" height="12" fill="#000"/><rect x="1028" y="292" width="3" height="10" fill="#fff"/><rect x="1035" y="291" width="5" height="3" fill="#000"/><path d="M179 449.5 h5 M203 402.5 h5 M211 402.5 h5 M355 472.5 h5 M531 412.5 h5 M547 420.5 h5 M603 416.5 h5 M803 442.5 h5 " stroke="#000" stroke-width="1"/></g><rect x="12.5" y="109.5" width="1305" height="566" fill="none" stroke="#000" stroke-width="1"/><path d="M1050 110 h9 l-4.5 5z" fill="#778899" shape-rendering="geometricPrecision"/><path d="M1318 111.5 h2 M1318 144.5 h2 M1318 177.5 h2 M1318 210.5 h2 M1318 243.5 h2 M1318 276.5 h2 M1318 309.5 h2 M1318 342.5 h2 M1318 375.5 h2 M1318 408.5 h2 M1318 441.5 h2 M1318 474.5 h2 M1318 507.5 h2 M1318 540.5 h2 M1318 573.5 h2 M1318 606.5 h2 M1318 639.5 h2 M1318 672.5 h2 M13.5 676 v4 M77.5 676 v4 M141.5 676 v4 M205.5 676 v4 M269.5 676 v4 M333.5 676 v4 M397.5 676 v4 M461.5 676 v4 M525.5 676 v4 M589.5 676 v4 M653.5 676 v4 M717.5 676 v4 M781.5 676 v4 M845.5 676 v4 M909.5 676 v4 M973.5 676 v4 M1037.5 676 v4 " stroke="#000" stroke-width="1"/></svg>
<div class="t" style="left:1323px;top:106px;font-size:10px;color:#000;transform:scaleX(0.9);transform-origin:0 0">1.50215</div>
<div class="t" style="left:1323px;top:139px;font-size:10px;color:#000;transform:scaleX(0.9);transform-origin:0 0">1.50030</div>
<div class="t" style="left:1323px;top:172px;font-size:10px;color:#000;transform:scaleX(0.9);transform-origin:0 0">1.49845</div>
<div class="t" style="left:1323px;top:205px;font-size:10px;color:#000;transform:scaleX(0.9);transform-origin:0 0">1.49660</div>
<div class="t" style="left:1323px;top:238px;font-size:10px;color:#000;transform:scaleX(0.9);transform-origin:0 0">1.49475</div>
<div class="t" style="left:1323px;top:271px;font-size:10px;color:#000;transform:scaleX(0.9);transform-origin:0 0">1.49290</div>
<div class="t" style="left:1323px;top:304px;font-size:10px;color:#000;transform:scaleX(0.9);transform-origin:0 0">1.49110</div>
<div class="t" style="left:1323px;top:337px;font-size:10px;color:#000;transform:scaleX(0.9);transform-origin:0 0">1.48925</div>
<div class="t" style="left:1323px;top:370px;font-size:10px;color:#000;transform:scaleX(0.9);transform-origin:0 0">1.48740</div>
<div class="t" style="left:1323px;top:403px;font-size:10px;color:#000;transform:scaleX(0.9);transform-origin:0 0">1.48555</div>
<div class="t" style="left:1323px;top:436px;font-size:10px;color:#000;transform:scaleX(0.9);transform-origin:0 0">1.48370</div>
<div class="t" style="left:1323px;top:469px;font-size:10px;color:#000;transform:scaleX(0.9);transform-origin:0 0">1.48185</div>
<div class="t" style="left:1323px;top:502px;font-size:10px;color:#000;transform:scaleX(0.9);transform-origin:0 0">1.48000</div>
<div class="t" style="left:1323px;top:535px;font-size:10px;color:#000;transform:scaleX(0.9);transform-origin:0 0">1.47815</div>
<div class="t" style="left:1323px;top:568px;font-size:10px;color:#000;transform:scaleX(0.9);transform-origin:0 0">1.47630</div>
<div class="t" style="left:1323px;top:601px;font-size:10px;color:#000;transform:scaleX(0.9);transform-origin:0 0">1.47445</div>
<div class="t" style="left:1323px;top:634px;font-size:10px;color:#000;transform:scaleX(0.9);transform-origin:0 0">1.47260</div>
<div class="t" style="left:1323px;top:667px;font-size:10px;color:#000;transform:scaleX(0.9);transform-origin:0 0">1.47075</div>
<div class="a" style="left:1319px;top:177px;width:41px;height:11px;background:#0000cd"></div>
<div class="t" style="left:1323px;top:178px;font-size:10px;color:#fff;transform:scaleX(0.9);transform-origin:0 0">1.49812</div>
<div class="a" style="left:1319px;top:244px;width:41px;height:11px;background:#ff0000"></div>
<div class="t" style="left:1323px;top:245px;font-size:10px;color:#fff;transform:scaleX(0.9);transform-origin:0 0">1.49438</div>
<div class="a" style="left:1319px;top:288px;width:41px;height:11px;background:#000"></div>
<div class="t" style="left:1323px;top:289px;font-size:10px;color:#fff;transform:scaleX(0.9);transform-origin:0 0">1.49197</div>
<div class="a" style="left:1319px;top:361px;width:41px;height:11px;background:#0000cd"></div>
<div class="t" style="left:1323px;top:362px;font-size:10px;color:#fff;transform:scaleX(0.9);transform-origin:0 0">1.48782</div>
<div class="t" style="left:12px;top:680px;font-size:10px;transform:scaleX(0.95);transform-origin:0 0;color:#000">16 Apr 2014</div>
<div class="t" style="left:76px;top:680px;font-size:10px;transform:scaleX(0.95);transform-origin:0 0;color:#000">17 Apr 08:00</div>
<div class="t" style="left:140px;top:680px;font-size:10px;transform:scaleX(0.95);transform-origin:0 0;color:#000">18 Apr 16:00</div>
<div class="t" style="left:204px;top:680px;font-size:10px;transform:scaleX(0.95);transform-origin:0 0;color:#000">22 Apr 00:00</div>
<div class="t" style="left:268px;top:680px;font-size:10px;transform:scaleX(0.95);transform-origin:0 0;color:#000">23 Apr 08:00</div>
<div class="t" style="left:332px;top:680px;font-size:10px;transform:scaleX(0.95);transform-origin:0 0;color:#000">24 Apr 16:00</div>
<div class="t" style="left:396px;top:680px;font-size:10px;transform:scaleX(0.95);transform-origin:0 0;color:#000">28 Apr 00:00</div>
<div class="t" style="left:460px;top:680px;font-size:10px;transform:scaleX(0.95);transform-origin:0 0;color:#000">29 Apr 08:00</div>
<div class="t" style="left:524px;top:680px;font-size:10px;transform:scaleX(0.95);transform-origin:0 0;color:#000">30 Apr 16:00</div>
<div class="t" style="left:588px;top:680px;font-size:10px;transform:scaleX(0.95);transform-origin:0 0;color:#000">2 May 00:00</div>
<div class="t" style="left:652px;top:680px;font-size:10px;transform:scaleX(0.95);transform-origin:0 0;color:#000">5 May 08:00</div>
<div class="t" style="left:716px;top:680px;font-size:10px;transform:scaleX(0.95);transform-origin:0 0;color:#000">6 May 16:00</div>
<div class="t" style="left:780px;top:680px;font-size:10px;transform:scaleX(0.95);transform-origin:0 0;color:#000">8 May 00:00</div>
<div class="t" style="left:844px;top:680px;font-size:10px;transform:scaleX(0.95);transform-origin:0 0;color:#000">9 May 08:00</div>
<div class="t" style="left:908px;top:680px;font-size:10px;transform:scaleX(0.95);transform-origin:0 0;color:#000">12 May 16:00</div>
<div class="t" style="left:972px;top:680px;font-size:10px;transform:scaleX(0.95);transform-origin:0 0;color:#000">14 May 00:00</div>
<div class="t" style="left:1036px;top:680px;font-size:10px;transform:scaleX(0.95);transform-origin:0 0;color:#000">15 May 08:00</div>
<svg class="a" style="left:16px;top:116px" width="7" height="4"><path d="M0 0 h7 l-3.5 4z" fill="#000"/></svg>
<div class="t" style="left:26px;top:112px;padding:1px 2px;background:#fff;font-size:10px;color:#000;transform:scaleX(0.935);transform-origin:0 0">GBPCHF,H4</div>
<div class="t" style="left:86px;top:112px;padding:1px 2px;background:#fff;font-size:10px;color:#000;transform:scaleX(0.935);transform-origin:0 0">1.49207 1.49249 1.49195 1.49197</div>
<div class="a" style="left:8px;top:694px;width:1354px;height:21px;background:#f0f0f0"></div>
<div class="a" style="left:8px;top:695px;width:1354px;height:1px;background:#000"></div>
<div class="a" style="left:9px;top:696px;width:1px;height:18px;background:#a0a0a0"></div>
<div class="a" style="left:332px;top:695px;width:80px;height:19px;background:#fff;border:1px solid #000;border-top:1px solid #000;box-sizing:border-box"></div>
<div class="t" style="left:23px;top:700px;font-size:10px;color:#6d7891">EURUSD,M15</div>
<div class="t" style="left:111.5px;top:700px;font-size:10px;color:#6d7891">GBPUSD,H4</div>
<div class="t" style="left:190.4px;top:700px;font-size:10px;color:#6d7891">USDJPY,H1</div>
<div class="t" style="left:266px;top:700px;font-size:10px;color:#6d7891">EURJPY,H4</div>
<div class="t" style="left:422.5px;top:700px;font-size:10px;color:#6d7891">AUDUSD,H4</div>
<div class="t" style="left:502px;top:700px;font-size:10px;color:#6d7891">NZDUSD,H4</div>
<div class="t" style="left:581.5px;top:700px;font-size:10px;color:#6d7891">XAUUSD,H4</div>
<div class="t" style="left:661px;top:700px;font-size:10px;color:#6d7891">EURCHF,Daily</div>
<div class="t" style="left:751px;top:700px;font-size:10px;color:#6d7891">EURGBP,H4</div>
<div class="t" style="left:830.5px;top:700px;font-size:10px;color:#6d7891">GBPJPY,H4</div>
<div class="t" style="left:906.5px;top:700px;font-size:10px;color:#6d7891">AUDNZD,H4</div>
<div class="t" style="left:986.5px;top:700px;font-size:10px;color:#6d7891">USDCAD,H4</div>
<div class="t" style="left:1066.4px;top:700px;font-size:10px;color:#6d7891">USDCHF,H4</div>
<div class="t" style="left:343px;top:700px;font-size:10px;color:#000">GBPCHF,H4</div>
<div class="a" style="left:100px;top:699px;width:1px;height:12px;background:#606060"></div>
<div class="a" style="left:180px;top:699px;width:1px;height:12px;background:#606060"></div>
<div class="a" style="left:256px;top:699px;width:1px;height:12px;background:#606060"></div>
<div class="a" style="left:492px;top:699px;width:1px;height:12px;background:#606060"></div>
<div class="a" style="left:572px;top:699px;width:1px;height:12px;background:#606060"></div>
<div class="a" style="left:652px;top:699px;width:1px;height:12px;background:#606060"></div>
<div class="a" style="left:741px;top:699px;width:1px;height:12px;background:#606060"></div>
<div class="a" style="left:820px;top:699px;width:1px;height:12px;background:#606060"></div>
<div class="a" style="left:897px;top:699px;width:1px;height:12px;background:#606060"></div>
<div class="a" style="left:976px;top:699px;width:1px;height:12px;background:#606060"></div>
<div class="a" style="left:1057px;top:699px;width:1px;height:12px;background:#606060"></div>
<div class="a" style="left:1137px;top:699px;width:1px;height:12px;background:#606060"></div>
<svg class="a" style="left:1334px;top:701px" width="5" height="8"><path d="M4 0.5 v7 l-3.5 -3.5z" fill="#9a9a9a"/></svg>
<svg class="a" style="left:1351px;top:701px" width="5" height="8"><path d="M0.5 0.5 v7 l3.5 -3.5z" fill="#9a9a9a"/></svg>
<div class="a" style="left:8px;top:715px;width:1354px;height:21px;background:#f0f0f0"></div>
<div class="a" style="left:8px;top:714px;width:1354px;height:1px;background:#fff"></div>
<div class="t" style="left:10px;top:722px;font-size:12px;color:#000;transform:scaleX(0.95);transform-origin:0 0">Для справки, нажмите F1</div>
<div class="t" style="left:642px;top:721px;font-size:12px;color:#000">Default</div>
<div class="t" style="left:1266px;top:721px;font-size:12px;color:#000;transform:scaleX(0.935);transform-origin:0 0">963/2 kb</div>
<div class="a" style="left:636px;top:719px;width:1px;height:16px;background:#a0a0a0"></div>
<div class="a" style="left:752px;top:719px;width:1px;height:16px;background:#a0a0a0"></div>
<div class="a" style="left:854px;top:719px;width:1px;height:16px;background:#a0a0a0"></div>
<div class="a" style="left:925px;top:719px;width:1px;height:16px;background:#a0a0a0"></div>
<div class="a" style="left:996px;top:719px;width:1px;height:16px;background:#a0a0a0"></div>
<div class="a" style="left:1064px;top:719px;width:1px;height:16px;background:#a0a0a0"></div>
<div class="a" style="left:1134px;top:719px;width:1px;height:16px;background:#a0a0a0"></div>
<div class="a" style="left:1200px;top:719px;width:1px;height:16px;background:#a0a0a0"></div>
<svg class="a" style="left:1206px;top:720px" width="24" height="13"><rect x="0" y="0" width="1" height="13" fill="#5a7a10"/><rect x="0" y="13" width="1" height="0" fill="#a01010"/><rect x="2" y="0" width="1" height="13" fill="#5a7a10"/><rect x="2" y="12" width="1" height="1" fill="#a01010"/><rect x="4" y="0" width="1" height="13" fill="#5a7a10"/><rect x="4" y="11" width="1" height="2" fill="#a01010"/><rect x="6" y="0" width="1" height="13" fill="#5a7a10"/><rect x="6" y="10" width="1" height="3" fill="#a01010"/><rect x="8" y="0" width="1" height="13" fill="#5a7a10"/><rect x="8" y="9" width="1" height="4" fill="#a01010"/><rect x="10" y="0" width="1" height="13" fill="#5a7a10"/><rect x="10" y="8" width="1" height="5" fill="#a01010"/><rect x="12" y="0" width="1" height="13" fill="#5a7a10"/><rect x="12" y="7" width="1" height="6" fill="#a01010"/><rect x="14" y="0" width="1" height="13" fill="#5a7a10"/><rect x="14" y="6" width="1" height="7" fill="#a01010"/><rect x="16" y="0" width="1" height="13" fill="#5a7a10"/><rect x="16" y="5" width="1" height="8" fill="#a01010"/><rect x="18" y="0" width="1" height="13" fill="#5a7a10"/><rect x="18" y="4" width="1" height="9" fill="#a01010"/><rect x="20" y="0" width="1" height="13" fill="#5a7a10"/><rect x="20" y="3" width="1" height="10" fill="#a01010"/></svg>
<svg class="a" style="left:1346px;top:720px" width="15" height="15"><path d="M14 2 L2 14 M14 6 L6 14 M14 10 L10 14" stroke="#a0a0a0" stroke-width="1.2"/></svg>
<div class="a" style="left:8px;top:736px;width:1362px;height:8px;background:#c27a5c"></div>
<div class="a" style="left:60px;top:737px;width:58px;height:7px;background:#cc967e;border:1px solid #dbb3a0;border-bottom:none;box-sizing:border-box"></div>
<div class="a" style="left:247px;top:737px;width:57px;height:7px;background:#cc967e;border:1px solid #dbb3a0;border-bottom:none;box-sizing:border-box"></div>
<div class="a" style="left:308px;top:737px;width:57px;height:7px;background:#cc967e;border:1px solid #dbb3a0;border-bottom:none;box-sizing:border-box"></div>
<div class="a" style="left:370px;top:737px;width:58px;height:7px;background:#cc967e;border:1px solid #f2e6e0;border-bottom:none;box-sizing:border-box"></div>
<div class="a" style="left:136px;top:741px;width:30px;height:3px;background:#108a10"></div>
<div class="a" style="left:86px;top:741px;width:10px;height:3px;border-radius:5px 5px 0 0;background:#e04030"></div>
<svg class="a" style="left:30px;top:740px" width="17" height="4"><path d="M0 4 L16 0 L16 4z" fill="#f4ece6"/></svg>
<div class="a" style="left:198px;top:741px;width:18px;height:3px;background:#2050a0"></div>
<div class="a" style="left:268px;top:741px;width:14px;height:3px;border-radius:7px 7px 0 0;background:#30b0f0"></div>
<div class="a" style="left:322px;top:740px;width:17px;height:4px;background:#6090c0"></div>
<div class="a" style="left:386px;top:740px;width:25px;height:4px;border-radius:12px 12px 0 0;background:#f0a030"></div>
</body></html>
